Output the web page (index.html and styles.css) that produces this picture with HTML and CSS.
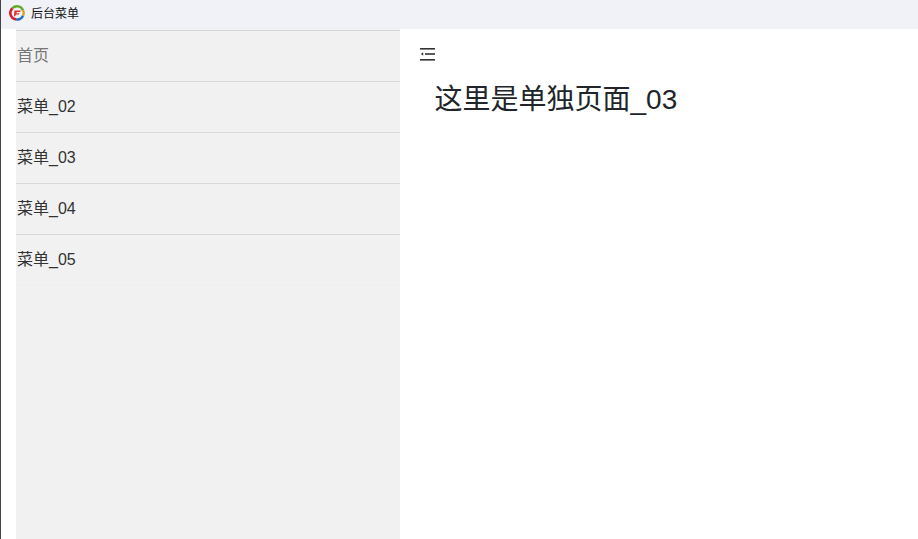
FILE: index.html
```html
<!DOCTYPE html>
<html lang="zh-CN">
<head>
<meta charset="utf-8">
<title>后台菜单</title>
<link rel="stylesheet" href="styles.css">
</head>
<body>
<div class="window">
  <header class="titlebar">
    <svg class="logo" width="16" height="16" viewBox="0 0 16 16">
      <path d="M3.4 3.2A6.5 6.5 0 0 1 14 5.2" fill="none" stroke="#62a92c" stroke-width="2.4"/>
      <path d="M14 5.2A6.5 6.5 0 0 1 14 10.8" fill="none" stroke="#d9a520" stroke-width="2.4"/>
      <path d="M14 10.8A6.5 6.5 0 0 1 7 14.4" fill="none" stroke="#1f6fc4" stroke-width="2.4"/>
      <path d="M7 14.4A6.5 6.5 0 0 1 3.4 3.2" fill="none" stroke="#d8202a" stroke-width="2.6"/>
      <path d="M5.4 5.6H11.8L11.2 7.1H7.8L7.4 8.2H10.4L9.9 9.6H6.9L6.2 11.2H4.9Z" fill="#e2352b"/>
    </svg>
    <span class="tab-title">后台菜单</span>
  </header>
  <div class="body">
    <nav class="sidebar">
      <ul class="menu">
        <li class="menu-item menu-home">首页</li>
        <li class="menu-item">菜单_02</li>
        <li class="menu-item">菜单_03</li>
        <li class="menu-item">菜单_04</li>
        <li class="menu-item">菜单_05</li>
      </ul>
    </nav>
    <main class="content">
      <svg class="toggle" width="16" height="14" viewBox="0 0 16 14">
        <rect x="0" y="1" width="15" height="1.6" fill="#333"/>
        <rect x="5" y="6.2" width="10" height="1.6" fill="#333"/>
        <path d="M0.8 7L3.2 5.2V8.8Z" fill="#333"/>
        <rect x="0" y="12" width="15" height="1.6" fill="#333"/>
      </svg>
      <h1 class="page-title">这里是单独页面_03</h1>
    </main>
  </div>
</div>
</body>
</html>
```

FILE: styles.css
```css
* {
  box-sizing: border-box;
}

html,
body {
  margin: 0;
  height: 100%;
  overflow: hidden;
}

body {
  font-family: "Liberation Sans", "Noto Sans CJK SC", sans-serif;
  background: #fff;
}

.window {
  display: flex;
  flex-direction: column;
  height: 539px;
  border-left: 1px solid #444;
}

.titlebar {
  display: flex;
  align-items: center;
  flex: 0 0 29px;
  padding-left: 8px;
  padding-bottom: 5px;
  gap: 6px;
  background: #f0f2f8;
}

.logo {
  position: relative;
  top: 1px;
}

.tab-title {
  font-size: 12px;
  font-weight: 400;
  color: #111;
}

.body {
  display: flex;
  flex: 1;
  min-height: 0;
  padding-left: 15px;
}

.sidebar {
  width: 384px;
  background: #f1f1f1;
  padding-top: 1px;
}

.menu {
  list-style: none;
  margin: 0;
  padding: 0;
  border-bottom: 1px solid #eeeeee;
}

.menu-item {
  height: 51px;
  padding-left: 1px;
  line-height: 50px;
  font-size: 16px;
  color: #333;
  border-top: 1px solid #d8d8d8;
}

.menu-home {
  color: #777;
}

.content {
  flex: 1;
  padding: 18px 0 0 20px;
}

.toggle {
  display: block;
}

.page-title {
  margin: 22px 0 0 14.5px;
  font-size: 28px;
  font-weight: 400;
  line-height: 34px;
  color: #212529;
}
```
